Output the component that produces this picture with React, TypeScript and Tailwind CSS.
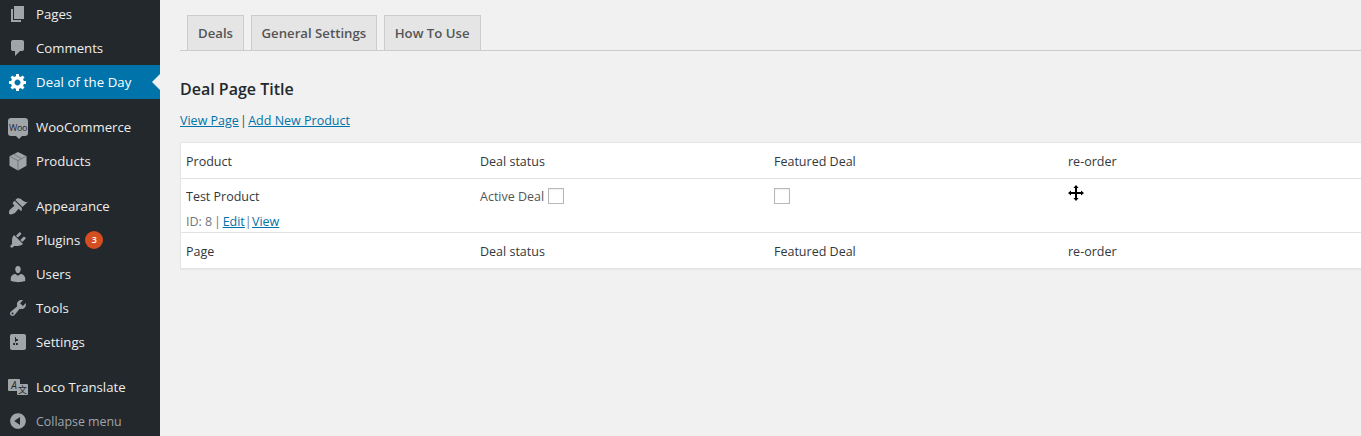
import type { ReactNode } from "react";

const font = { fontFamily: '"Open Sans", sans-serif' };

const Dash = ({ d }: { d: string }) => (
    <svg viewBox="0 0 20 20" className="w-5 h-5" fill="currentColor">
        <path d={d} />
    </svg>
);

const icons: Record<string, ReactNode> = {
    pages: <Dash d="M6 15V2h10v13H6zm-1 1h8v2H3V5h2v11z" />,
    comments: <Dash d="M5 2h9q.82 0 1.41.59T16 4v7q0 .82-.59 1.41T14 13h-2l-5 5v-5H5q-.82 0-1.41-.59T3 11V4q0-.82.59-1.41T5 2z" />,
    gear: <Dash d="M18 12h-2.18c-.17.7-.44 1.35-.81 1.93l1.54 1.54-2.1 2.1-1.54-1.54c-.58.36-1.23.63-1.91.79V19H8v-2.18c-.68-.16-1.33-.43-1.91-.79l-1.54 1.54-2.12-2.12 1.54-1.54c-.36-.58-.63-1.23-.79-1.91H1V9.03h2.17c.16-.7.44-1.35.8-1.94L2.43 5.55l2.1-2.1 1.54 1.54c.58-.37 1.24-.64 1.93-.81V2h3v2.18c.68.16 1.33.43 1.91.79l1.54-1.54 2.12 2.12-1.54 1.54c.36.59.64 1.24.8 1.94H18V12zm-8.5 1.5c1.66 0 3-1.34 3-3s-1.34-3-3-3-3 1.34-3 3 1.34 3 3 3z" />,
    woo: (
        <span className="relative flex h-[18px] w-5 items-center justify-center rounded-[3px] bg-[#a0a5aa]">
            <span className="text-[9px] leading-none tracking-[-0.3px] text-[#23282d]">Woo</span>
            <span className="absolute -bottom-[3px] left-[8px] h-0 w-0 border-x-[3px] border-t-[3px] border-x-transparent border-t-[#a0a5aa]" />
        </span>
    ),
    products: (
        <svg viewBox="0 0 20 20" className="w-5 h-5" fill="currentColor">
            <path d="M10 1l8.5 4.2v9.6L10 19.5l-8.5-4.7V5.2L10 1z" />
            <path d="M2.5 5.6L10 9.6l7.5-4M10 9.6v9.4M6 3.4l7.6 4.2" fill="none" stroke="#5f6469" strokeWidth="0.7" />
        </svg>
    ),
    appearance: <Dash d="M14.48 11.06L7.41 3.99l1.5-1.5c.5-.56 2.3-.47 3.51.32 1.21.8 1.43 1.28 2.91 2.1 1.18.64 2.45 1.26 4.45.85zm-.71.71L6.7 4.7 4.93 6.47c-.39.39-.39 1.02 0 1.41l1.06 1.06c.39.39.39 1.03 0 1.42-.6.6-1.43 1.11-2.21 1.69-.35.26-.7.53-1.01.84C1.43 13.23.4 17 1.42 18c1 1 4.6-.1 6-1.4.31-.31.58-.66.84-1.01.58-.78 1.09-1.61 1.69-2.21.39-.39 1.03-.39 1.42 0l1.06 1.06c.39.39 1.02.39 1.41 0z" />,
    plugins: <Dash d="M13.11 4.36L9.87 7.6 8 5.73l3.24-3.24c.35-.34 1.05-.2 1.56.32.52.51.66 1.21.31 1.55zm-8 1.77l.91-1.12 9.01 9.01-1.19.84c-.71.71-2.63 1.16-3.82 1.16H6.14L4.9 17.26c-.59.59-1.54.59-2.12 0-.59-.58-.59-1.53 0-2.12l1.24-1.24v-3.88c0-1.13.4-3.19 1.09-3.89zm7.26 3.97l3.24-3.24c.34-.35 1.04-.21 1.55.31.52.51.66 1.21.31 1.55l-3.24 3.25z" />,
    users: <Dash d="M10 9.25c-2.27 0-2.73-3.44-2.73-3.44C7 4.02 7.82 2 9.97 2c2.16 0 2.98 2.02 2.71 3.81 0 0-.41 3.44-2.68 3.44zm0 2.57L12.72 10c2.39 0 4.52 2.33 4.52 4.53v2.49s-3.65 1.13-7.24 1.13c-3.65 0-7.24-1.13-7.24-1.13v-2.49c0-2.25 1.94-4.48 4.47-4.48z" />,
    tools: <Dash d="M16.68 9.77c-1.34 1.34-3.3 1.67-4.95.99l-5.41 6.52c-.99.99-2.59.99-3.58 0s-.99-2.59 0-3.57l6.52-5.42c-.68-1.65-.35-3.61.99-4.95 1.28-1.28 3.12-1.62 4.72-1.06l-2.89 2.89 2.82 2.82 2.86-2.87c.53 1.58.18 3.39-1.08 4.65zM3.81 16.21c.4.39 1.04.39 1.43 0 .4-.4.4-1.04 0-1.43-.39-.4-1.03-.4-1.43 0-.39.39-.39 1.03 0 1.43z" />,
    settings: <Dash d="M18 16V4c0-1.1-.9-2-2-2H4c-1.1 0-2 .9-2 2v12c0 1.1.9 2 2 2h12c1.1 0 2-.9 2-2zM8 11h1c.55 0 1 .45 1 1s-.45 1-1 1H8v1.5c0 .28-.22.5-.5.5s-.5-.22-.5-.5V13H6c-.55 0-1-.45-1-1s.45-1 1-1h1V5.5c0-.28.22-.5.5-.5s.5.22.5.5V7h1c.55 0 1 .45 1 1s-.45 1-1 1h-1v5.5c0 .28-.22.5-.5.5s-.5-.22-.5-.5V9z" />,
    loco: (
        <span className="relative block h-[16px] w-5">
            <span className="absolute left-0 top-0 flex h-[12px] w-[12px] items-center justify-center rounded-[1px] bg-[#a0a5aa] text-[10px] italic leading-none text-[#23282d]">A</span>
            <span className="absolute bottom-0 right-0 flex h-[11px] w-[11px] items-center justify-center rounded-[1px] bg-[#a0a5aa] text-[9px] leading-none text-[#23282d]" style={{ fontFamily: '"Noto Sans CJK SC", sans-serif' }}>文</span>
        </span>
    ),
};

const groups = [
    [
        { key: "pages", label: "Pages" },
        { key: "comments", label: "Comments" },
        { key: "gear", label: "Deal of the Day", active: true },
    ],
    [
        { key: "woo", label: "WooCommerce" },
        { key: "products", label: "Products" },
    ],
    [
        { key: "appearance", label: "Appearance" },
        { key: "plugins", label: "Plugins", badge: "3" },
        { key: "users", label: "Users" },
        { key: "tools", label: "Tools" },
        { key: "settings", label: "Settings" },
    ],
    [{ key: "loco", label: "Loco Translate" }],
];

function Sidebar() {
    return (
        <aside className="w-40 shrink-0 bg-[#23282d] -mt-[3px] h-[439px]">
            <div className="flex flex-col gap-[11px]">
                {groups.map((items, i) => (
                    <ul key={i}>
                        {items.map((item: any) => (
                            <li
                                key={item.key}
                                className={
                                    item.active
                                        ? "relative flex h-[34px] items-center bg-[#0073aa] text-white"
                                        : "flex h-[34px] items-center text-[#eeeeee]"
                                }
                            >
                                <span className={item.active ? "flex w-9 justify-center text-white" : "flex w-9 justify-center text-[#a0a5aa]"}>
                                    {icons[item.key]}
                                </span>
                                <span className={item.active ? "text-[13.2px] leading-[18px] tracking-[0.1px]" : "text-[13.2px] leading-[18px]"}>{item.label}</span>
                                {item.badge && (
                                    <span className="ml-[5px] flex h-[18px] w-[18px] items-center justify-center rounded-full bg-[#d54e21] text-[9px] font-semibold text-white">
                                        {item.badge}
                                    </span>
                                )}
                                {item.active && (
                                    <span className="absolute right-0 top-[9px] h-0 w-0 border-y-[8px] border-r-[8px] border-y-transparent border-r-[#f1f1f1]" />
                                )}
                            </li>
                        ))}
                    </ul>
                ))}
            </div>
            <div className="flex h-[34px] items-center text-[#a0a5aa]">
                <span className="flex w-9 justify-center">
                    <Dash d="M10 2.16c4.33 0 7.84 3.51 7.84 7.84s-3.51 7.84-7.84 7.84S2.16 14.33 2.16 10 5.71 2.16 10 2.16zm2 11.72V6.12L6.18 9.97z" />
                </span>
                <span className="mt-[2px] text-[12.4px] leading-[18px]">Collapse menu</span>
            </div>
        </aside>
    );
}

const Check = () => (
    <span className="inline-block h-4 w-4 border border-[#b4b9be] bg-white shadow-[inset_0_1px_2px_rgba(0,0,0,0.07)]" />
);

const Link = ({ children }: { children: ReactNode }) => (
    <a href="#" className="text-[#0073aa] underline">
        {children}
    </a>
);

const rowClass = "grid grid-cols-[294px_294px_294px_294px] pl-[5px]";

function HeadRow({ first, className }: { first: string; className: string }) {
    return (
        <div className={`${rowClass} items-center pt-1 text-[#32373c] ${className}`}>
            <span>{first}</span>
            <span>Deal status</span>
            <span>Featured Deal</span>
            <span>re-order</span>
        </div>
    );
}

const MoveIcon = () => (
    <svg viewBox="0 0 16 16" className="h-4 w-4" fill="#000">
        <path d="M8 0l2.6 3H9v4h4V5.4L16 8l-3 2.6V9H9v4h1.6L8 16l-2.6-3H7V9H3v1.6L0 8l3-2.6V7h4V3H5.4L8 0z" />
    </svg>
);

const tabClass = "flex h-9 items-center border border-[#ccc] bg-[#e5e5e5] px-[10px] pt-[2px] text-[13.2px] font-semibold text-[#555]";

export default function App() {
    return (
        <div className="flex h-[436px] w-[1361px] overflow-hidden bg-[#f1f1f1] text-[#444]" style={font}>
            <Sidebar />
            <main className="min-w-0 flex-1 pl-5">
                <nav className="mt-[15px] flex h-9 gap-[6.5px] border-b border-[#ccc] pl-[7px]">
                    <span className={tabClass}>Deals</span>
                    <span className={tabClass}>General Settings</span>
                    <span className={tabClass}>How To Use</span>
                </nav>
                <h1 className="mt-[27px] text-[16px] font-semibold leading-[22px] text-[#23282d]">Deal Page Title</h1>
                <p className="mt-3 text-[12.5px] leading-[18px]">
                    <Link>View Page</Link> <span className="mx-[-2px]">|</span> <Link>Add New Product</Link>
                </p>
                <section className="mt-3 w-[1200px] border border-[#e5e5e5] bg-white text-[12.5px] shadow-[0_1px_1px_rgba(0,0,0,0.04)]">
                    <HeadRow first="Product" className="h-9 border-b border-[#e1e1e1]" />
                    <div className={`${rowClass} h-[54px] border-b border-[#e1e1e1]`}>
                        <div>
                            <div className="mt-[9px] leading-[18px] text-[#32373c]">Test Product</div>
                            <div className="mt-[7px] leading-[18px] text-[#72777c]">
                                ID: 8 <span className="mx-[-1.5px]">|</span> <Link>Edit</Link><span className="mr-[-3px]">|</span> <Link>View</Link>
                            </div>
                        </div>
                        <div className="mt-[9px] flex items-start gap-1 self-start leading-[18px] text-[#555]">
                            Active Deal <Check />
                        </div>
                        <div className="mt-[9px] flex self-start">
                            <Check />
                        </div>
                        <div className="mt-[6px] self-start">
                            <MoveIcon />
                        </div>
                    </div>
                    <HeadRow first="Page" className="h-[35px]" />
                </section>
            </main>
        </div>
    );
}
